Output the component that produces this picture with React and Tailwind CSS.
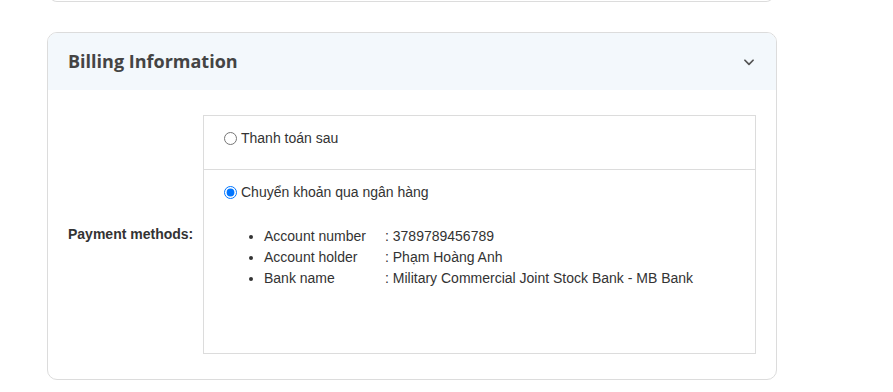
import { useState } from 'react';

const accountRows = [
  { label: 'Account number', value: '3789789456789' },
  { label: 'Account holder', value: 'Phạm Hoàng Anh' },
  { label: 'Bank name', value: 'Military Commercial Joint Stock Bank - MB Bank' },
];

const App = () => {
  const [method, setMethod] = useState('bank');

  return (
    <div className="flex flex-col min-h-[392px] bg-white text-[#333] font-['Liberation_Sans',Arial,sans-serif]">
      {/* bottom edge of the previous card */}
      <div className="ml-[49px] w-[725px] h-[12px] -mt-[10px] border border-t-0 border-[#dcdcdc] rounded-b-[8px]" />

      <div className="ml-[47px] mt-[30px] w-[730px] border border-[#dcdcdc] rounded-[10px] overflow-hidden">
        <div className="h-[57px] bg-[#f3f8fc] flex items-center justify-between pl-[20px] pr-[20px]">
          <h2 className="text-[18px] font-bold text-[#444] font-['Open_Sans',sans-serif]">Billing Information</h2>
          <svg className="w-[14px] h-[14px] text-[#555]" viewBox="0 0 24 24" fill="none" stroke="currentColor" strokeWidth={3} strokeLinecap="round" strokeLinejoin="round">
            <path d="M5 9l7 7 7-7" />
          </svg>
        </div>

        <div className="flex items-center px-[20px] pt-[25px] pb-[25px]">
          <div className="w-[135px] shrink-0 text-[14px] font-bold text-[#333]">Payment methods:</div>

          <div className="flex-1 border border-[#dcdcdc]">
            <label className="flex items-center px-[20px] pt-[12px] pb-[21px] border-b border-[#dcdcdc] text-[14px] leading-[20px]">
              <input
                type="radio"
                name="payment"
                checked={method === 'later'}
                onChange={() => setMethod('later')}
                className="w-[13px] h-[13px] m-0 mr-[4px]"
              />
              Thanh toán sau
            </label>

            <div className="px-[20px] pt-[12px] pb-[64px]">
              <label className="flex items-center text-[14px] leading-[20px]">
                <input
                  type="radio"
                  name="payment"
                  checked={method === 'bank'}
                  onChange={() => setMethod('bank')}
                  className="w-[13px] h-[13px] m-0 mr-[4px]"
                />
                Chuyển khoản qua ngân hàng
              </label>

              <ul className="list-disc pl-[40px] mt-[24px] text-[14px] leading-[21px]">
                {accountRows.map((row) => (
                  <li key={row.label}>
                    <span className="inline-block w-[121px]">{row.label}</span>: {row.value}
                  </li>
                ))}
              </ul>
            </div>
          </div>
        </div>
      </div>
    </div>
  );
};

export default App;
